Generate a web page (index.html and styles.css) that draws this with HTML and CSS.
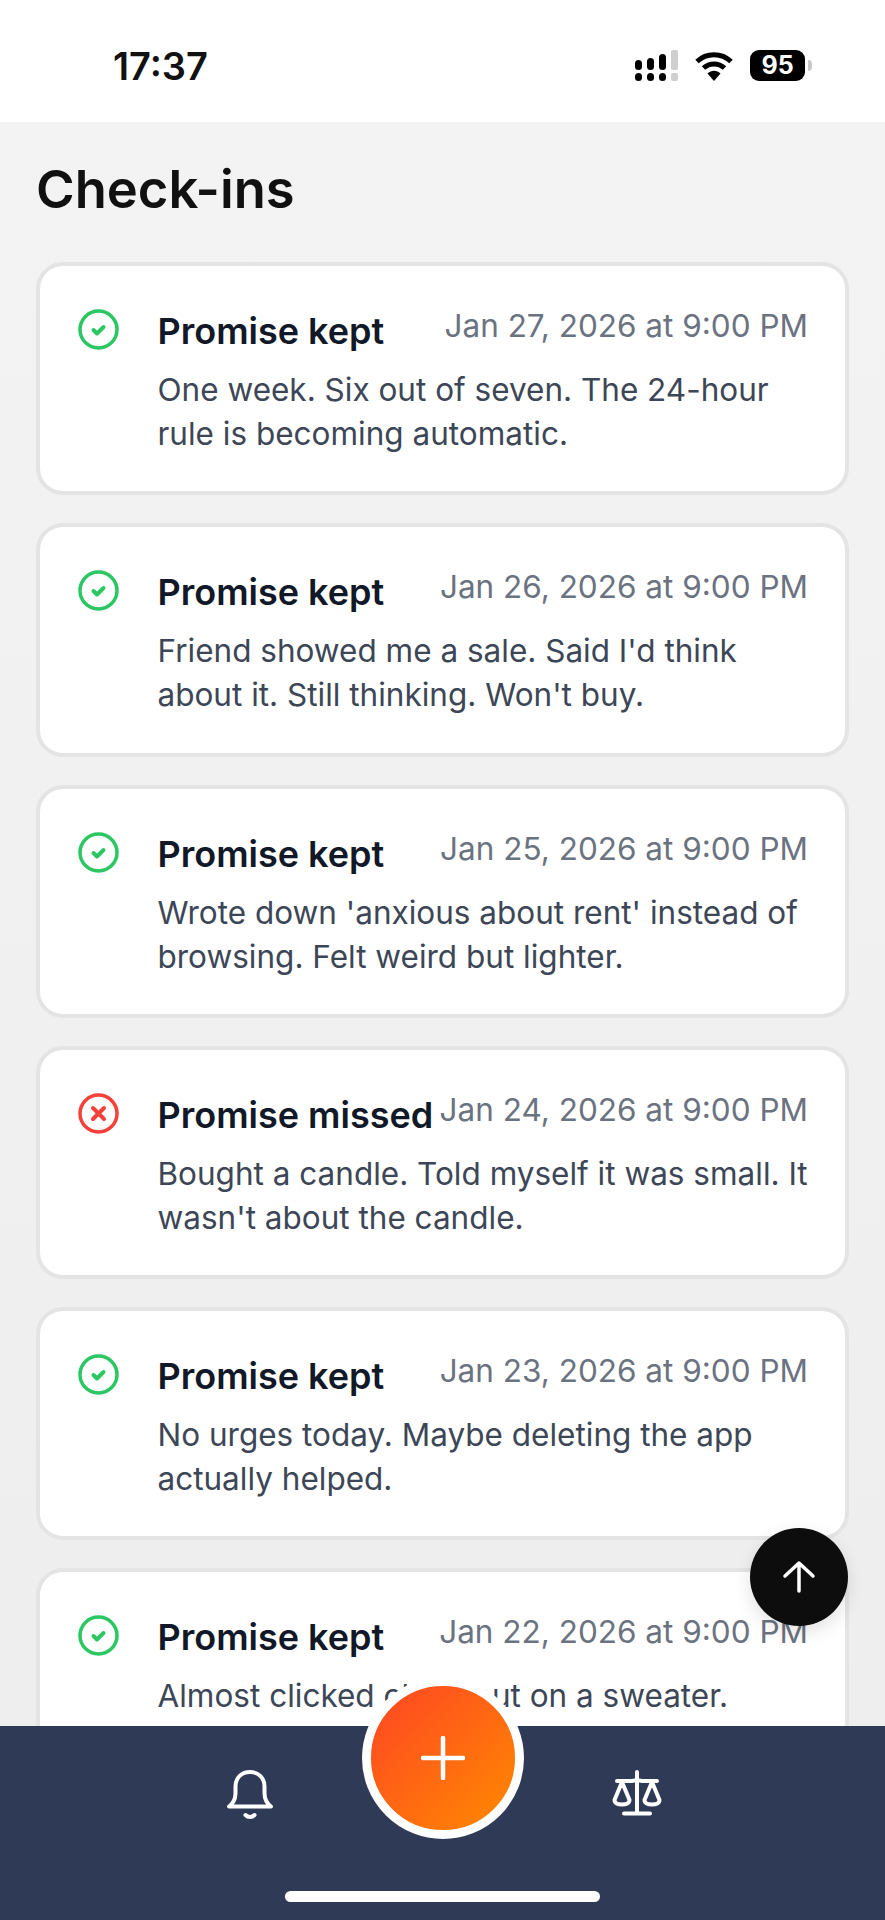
FILE: index.html
```html
<!DOCTYPE html>
<html lang="en">
<head>
  <meta charset="UTF-8" />
  <meta name="viewport" content="width=device-width, initial-scale=1.0"/>
  <title>Check-ins</title>
  <link rel="stylesheet" href="styles.css">
</head>
<body>
  <div class="phone">
    <div class="status-bar">
      <span class="time">17:37</span>
      <div class="status-icons">
        <svg class="signal" width="43" height="31" viewBox="0 0 43 31">
          <g fill="#000">
            <rect x="0" y="10" width="7" height="10" rx="3.5"/>
            <rect x="12" y="8" width="7" height="12" rx="3.5"/>
            <rect x="24" y="4" width="7" height="16" rx="3.5"/>
            <rect x="0" y="23" width="7" height="8" rx="3.5"/>
            <rect x="12" y="23" width="7" height="8" rx="3.5"/>
            <rect x="24" y="23" width="7" height="8" rx="3.5"/>
          </g>
          <g fill="#cfcfcf">
            <rect x="36" y="0" width="7" height="20" rx="2"/>
            <rect x="36" y="23" width="7" height="8" rx="2"/>
          </g>
        </svg>
        <svg class="wifi" width="38" height="30" viewBox="0 0 38 30">
          <path d="M2 10.500C11.500 1.500 26.500 1.500 36 10.500" fill="none" stroke="#000" stroke-width="5"/>
          <path d="M8.500 17C14.500 11.500 23.500 11.500 29.500 17" fill="none" stroke="#000" stroke-width="5"/>
          <path d="M12.500 22.500C16.500 18.800 21.500 18.800 25.500 22.500L19 30Z" fill="#000"/>
        </svg>
        <div class="battery">
          <span class="battery-level">95</span>
          <span class="battery-nub"></span>
        </div>
      </div>
    </div>

    <main class="content">
      <h1>Check-ins</h1>
      <div class="list">

        <div class="card">
          <svg class="state kept" viewBox="0 0 41 41"><circle cx="20.500" cy="20.500" r="18.500"/><path d="M15.500 21l3.500 3.500 6.500-6.500"/></svg>
          <div class="card-body">
            <div class="card-top">
              <span class="card-title">Promise kept</span>
              <span class="card-date">Jan 27, 2026 at 9:00 PM</span>
            </div>
            <p>One week. Six out of seven. The 24-hour rule is becoming automatic.</p>
          </div>
        </div>

        <div class="card">
          <svg class="state kept" viewBox="0 0 41 41"><circle cx="20.500" cy="20.500" r="18.500"/><path d="M15.500 21l3.500 3.500 6.500-6.500"/></svg>
          <div class="card-body">
            <div class="card-top">
              <span class="card-title">Promise kept</span>
              <span class="card-date">Jan 26, 2026 at 9:00 PM</span>
            </div>
            <p>Friend showed me a sale. Said I'd think about it. Still thinking. Won't buy.</p>
          </div>
        </div>

        <div class="card">
          <svg class="state kept" viewBox="0 0 41 41"><circle cx="20.500" cy="20.500" r="18.500"/><path d="M15.500 21l3.500 3.500 6.500-6.500"/></svg>
          <div class="card-body">
            <div class="card-top">
              <span class="card-title">Promise kept</span>
              <span class="card-date">Jan 25, 2026 at 9:00 PM</span>
            </div>
            <p>Wrote down 'anxious about rent' instead of browsing. Felt weird but lighter.</p>
          </div>
        </div>

        <div class="card">
          <svg class="state missed" viewBox="0 0 41 41"><circle cx="20.500" cy="20.500" r="18.500"/><path d="M15 15l11 11M26 15L15 26"/></svg>
          <div class="card-body">
            <div class="card-top">
              <span class="card-title">Promise missed</span>
              <span class="card-date">Jan 24, 2026 at 9:00 PM</span>
            </div>
            <p>Bought a candle. Told myself it was small. It wasn't about the candle.</p>
          </div>
        </div>

        <div class="card">
          <svg class="state kept" viewBox="0 0 41 41"><circle cx="20.500" cy="20.500" r="18.500"/><path d="M15.500 21l3.500 3.500 6.500-6.500"/></svg>
          <div class="card-body">
            <div class="card-top">
              <span class="card-title">Promise kept</span>
              <span class="card-date">Jan 23, 2026 at 9:00 PM</span>
            </div>
            <p>No urges today. Maybe deleting the app actually helped.</p>
          </div>
        </div>

        <div class="card">
          <svg class="state kept" viewBox="0 0 41 41"><circle cx="20.500" cy="20.500" r="18.500"/><path d="M15.500 21l3.500 3.500 6.500-6.500"/></svg>
          <div class="card-body">
            <div class="card-top">
              <span class="card-title">Promise kept</span>
              <span class="card-date">Jan 22, 2026 at 9:00 PM</span>
            </div>
            <p>Almost clicked checkout on a sweater.</p>
          </div>
        </div>

      </div>
    </main>

    <div class="tab-bar">
      <svg class="tab-icon" width="46" height="50" viewBox="0 0 46 50">
        <path d="M2 36.500h42c-4-3-6.500-6.500-6.500-13.500v-6.500C37.500 7.500 31 2 23 2S8.500 7.500 8.500 16.500V23C8.500 30 6 33.500 2 36.500Z"/>
        <path d="M18.500 45c2.500 2.600 6.500 2.600 9 0"/>
      </svg>
      <svg class="tab-icon" width="50" height="46" viewBox="0 0 50 46">
        <path d="M25 2v41M12 43.500h26M5 11h15c2 0 3.500-1 5-1s3 1 5 1h15"/>
        <path d="M10 12L2.500 30c0 3 3.500 4.500 7.500 4.500s7.500-1.500 7.500-4.500ZM40 12l-7.500 18c0 3 3.500 4.500 7.500 4.500s7.500-1.500 7.500-4.500Z"/>
      </svg>
      <div class="home-indicator"></div>
    </div>

    <div class="add-button">
      <svg width="44" height="44" viewBox="0 0 44 44"><path d="M22 2v40M2 22h40"/></svg>
    </div>
    <div class="top-button">
      <svg width="34" height="34" viewBox="0 0 34 34"><path d="M17 31V4M3 16L17 3l14 13"/></svg>
    </div>
  </div>
</body>
</html>
```

FILE: styles.css
```css
* {
  box-sizing: border-box;
}

body {
  margin: 0;
  font-family: Inter, 'Noto Sans', sans-serif;
  background: #f2f2f2;
}

.phone {
  position: relative;
  width: 885px;
  height: 1920px;
  overflow: hidden;
  display: flex;
  flex-direction: column;
}

.status-bar {
  height: 122px;
  flex-shrink: 0;
  background: white;
  display: flex;
  justify-content: space-between;
  align-items: flex-start;
  padding: 44px 73px 0 113px;
}

.time {
  font-size: 38px;
  line-height: 44px;
  font-weight: 600;
  color: #111;
}

.status-icons {
  display: flex;
  align-items: flex-start;
  gap: 17px;
  padding-top: 6px;
}

.wifi {
  margin-top: 1px;
}

.battery {
  display: flex;
  align-items: center;
  gap: 3px;
}

.battery-level {
  width: 55px;
  height: 31px;
  border-radius: 9px;
  background: #000;
  color: white;
  font-size: 25px;
  font-weight: 700;
  line-height: 31px;
  text-align: center;
}

.battery-nub {
  width: 4px;
  height: 11px;
  border-radius: 0 4px 4px 0;
  background: #c8c8c8;
}

.content {
  flex: 1;
  min-height: 0;
  overflow: hidden;
  padding: 38px 36px 0;
  background: linear-gradient(#f3f3f3, #eeeeee);
}

h1 {
  margin: 0 0 43px;
  font-size: 52.500px;
  line-height: 59px;
  font-weight: 600;
  color: #111;
}

.list {
  display: flex;
  flex-direction: column;
  gap: 28px;
}

.card {
  display: flex;
  gap: 38.500px;
  min-height: 233.300px;
  padding: 43px 37px 0 38px;
  background: white;
  border: 4px solid #e4e4e4;
  border-radius: 27px;
}

.state {
  width: 41px;
  height: 41px;
  flex-shrink: 0;
  fill: none;
  stroke-linecap: round;
  stroke-linejoin: round;
}

.state circle {
  stroke-width: 3.500;
}

.state path {
  stroke-width: 4;
}

.kept {
  stroke: #2cc763;
}

.missed {
  stroke: #f6403a;
}

.card-body {
  flex: 1;
  min-width: 0;
}

.card-top {
  display: flex;
  justify-content: space-between;
  align-items: flex-start;
}

.card-title {
  font-size: 36px;
  line-height: 44px;
  font-weight: 600;
  color: #111827;
  white-space: nowrap;
}

.card-date {
  font-size: 31.500px;
  line-height: 34px;
  color: #6b7280;
  white-space: nowrap;
}

.card p {
  margin: 15px 0 0;
  font-size: 31.500px;
  line-height: 44px;
  color: #3d4656;
}

.tab-bar {
  position: relative;
  height: 194px;
  flex-shrink: 0;
  background: #2f3a56;
  display: flex;
  justify-content: space-between;
  align-items: flex-start;
  padding: 44px 223px 0 227px;
}

.tab-icon {
  fill: none;
  stroke: white;
  stroke-width: 4;
  stroke-linecap: round;
  stroke-linejoin: round;
}

.home-indicator {
  position: absolute;
  left: 285px;
  bottom: 18px;
  width: 315px;
  height: 11px;
  border-radius: 6px;
  background: white;
}

.add-button {
  position: absolute;
  left: 362px;
  top: 1677px;
  width: 162px;
  height: 162px;
  border: 9px solid white;
  border-radius: 50%;
  background: linear-gradient(135deg, #ff4524, #ff8a00);
  display: flex;
  align-items: center;
  justify-content: center;
}

.add-button svg {
  fill: none;
  stroke: white;
  stroke-width: 4.500;
  stroke-linecap: round;
}

.top-button {
  position: absolute;
  left: 750px;
  top: 1528px;
  width: 98px;
  height: 98px;
  border-radius: 50%;
  background: #0d0d0d;
  box-shadow: 0 6px 18px rgba(0,0,0,0.12);
  display: flex;
  align-items: center;
  justify-content: center;
}

.top-button svg {
  fill: none;
  stroke: white;
  stroke-width: 3.500;
  stroke-linecap: round;
  stroke-linejoin: round;
}
```
